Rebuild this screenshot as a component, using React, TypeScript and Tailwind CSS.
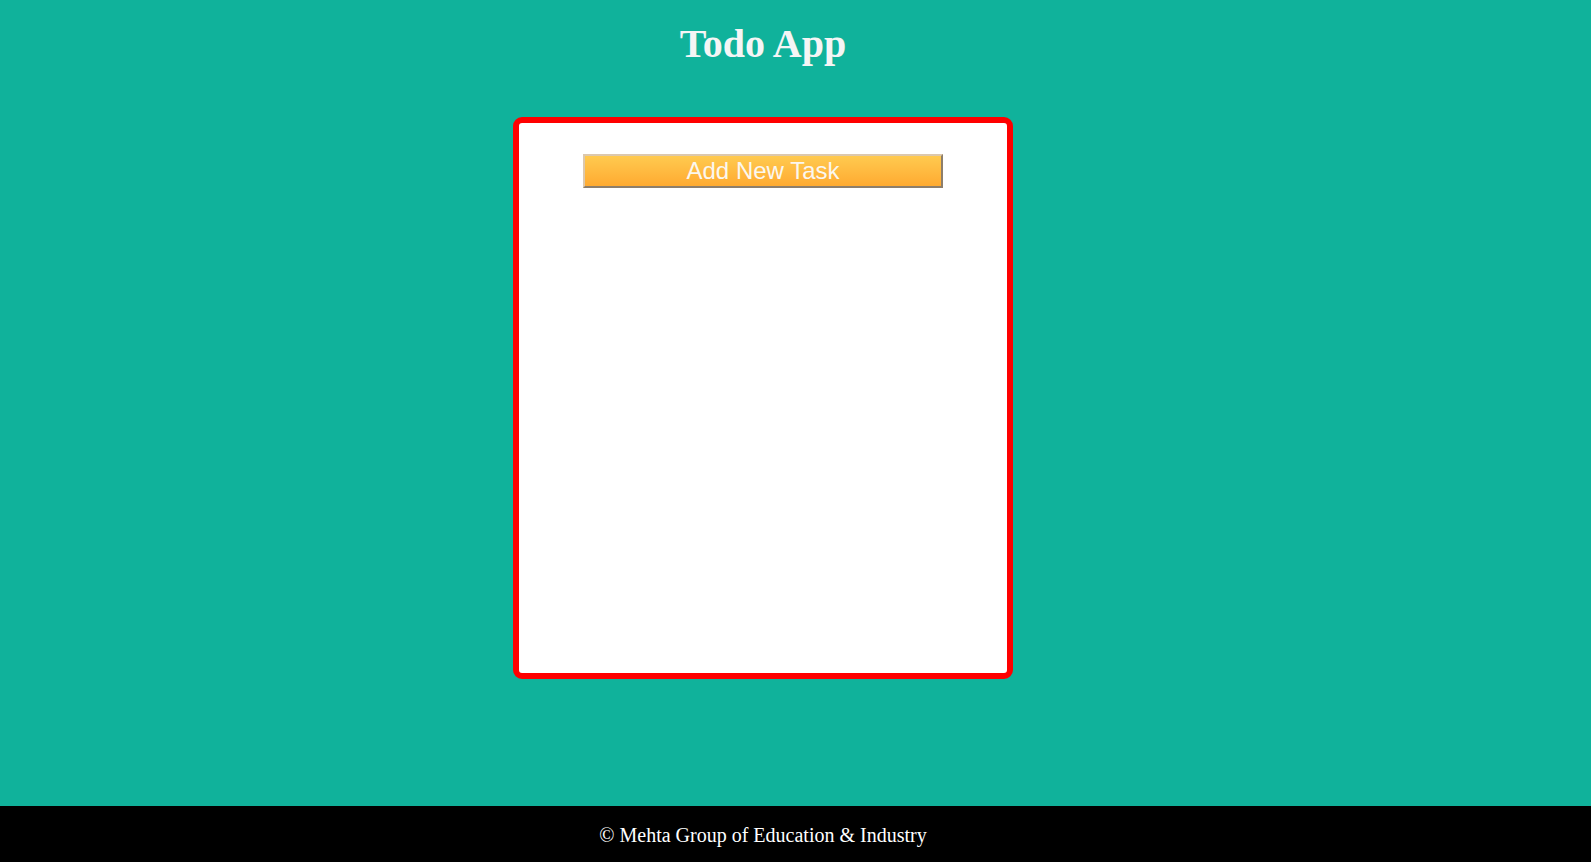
export default function App() {
  return (
    <div className="flex h-[862px] flex-col bg-[#10b29b]">
      <main className="flex w-[1526px] flex-1 flex-col items-center">
        <h1 className="mt-[19px] text-[40px] leading-[50px] font-bold text-[#f5f5f5] [font-family:'Liberation_Serif',serif]">
          Todo App
        </h1>
        <div className="mt-[48px] flex h-[562px] w-[500px] flex-col items-center rounded-[9px] border-[6px] border-[#ff0000] bg-white">
          <button className="mt-[31px] h-[34px] w-[360px] border-2 border-t-[#dcc8ad] border-l-[#dcc8ad] border-r-[#8d7e6b] border-b-[#8d7e6b] bg-gradient-to-b from-[#ffca4f] to-[#ffaa30] text-[24px] leading-[28px] text-[#fbf7ef] [font-family:'Liberation_Sans',Arial,sans-serif]">
            Add New Task
          </button>
        </div>
      </main>
      <footer className="flex h-[56px] w-full items-center bg-black pt-[2px]">
        <div className="w-[1526px] text-center text-[20px] text-white [font-family:'Liberation_Serif',serif]">
          © Mehta Group of Education &amp; Industry
        </div>
      </footer>
    </div>
  );
}
